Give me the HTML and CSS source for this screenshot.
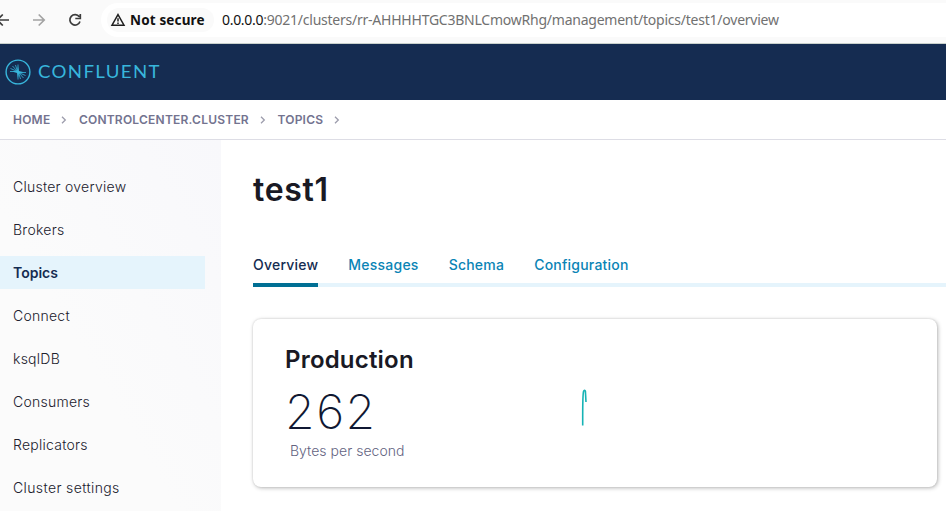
FILE: index.html
```html
<!DOCTYPE html>
<html lang="en">
<head>
<meta charset="utf-8">
<title>test1 - Overview</title>
<link rel="stylesheet" href="styles.css">
</head>
<body>
<div class="toolbar">
  <svg class="nav-icons" width="101" height="43" viewBox="0 0 101 43" fill="none" stroke="#3c3c3c" stroke-width="1.7">
    <path d="M9 20H-3M2.800 14.500L-2.700 20l5.500 5.500"/>
    <path stroke="#a3a3a3" d="M33 20h11M38.700 14.500L44.200 20l-5.500 5.500"/>
    <path d="M79.300 16.800A5.200 5.200 0 1 0 80 21.500M80.300 14v4.500h-5"/>
  </svg>
  <div class="omnibox">
    <div class="chip">
      <svg width="16" height="16" viewBox="0 0 16 16" fill="none" stroke="#1f1f1f" stroke-width="1.500"><path d="M8 2.600L14 13.200H2z"/><path d="M8 6.200v3.400M8 10.600v1.500"/></svg>
      <span class="chip-label">Not secure</span>
    </div>
    <span class="host">0.0.0.0</span><span class="path">:9021/clusters/rr-AHHHHTGC3BNLCmowRhg/management/topics/test1/overview</span>
  </div>
</div>
<header class="header">
  <svg width="26" height="26" viewBox="0 0 26 26" fill="none" stroke="#38b6dc" stroke-width="1.400">
    <circle cx="13" cy="13" r="11.900"/>
    <path stroke-width=".8" d="M5 12.500H13V5.500M21 13.500H13V20.500M12.500 12.500L10.500 6M12.500 12.500L7.500 7M12.500 12.500L5.500 9.500M13.500 13.500L15.500 20M13.500 13.500L18.500 19M13.500 13.500L20.500 16.500"/>
    <path fill="#38b6dc" stroke="none" d="M13 7l.9 5.100L19 13.200 14 13.900 12.900 19 12.100 13.900 7 12.600l5.100-.5z"/>
  </svg>
  <span class="wordmark">CONFLUENT</span>
</header>
<nav class="crumbs">
  <a>HOME</a><svg width="6" height="8" viewBox="0 0 6 8"><path d="M1 .8L4.300 4 1 7.200"/></svg>
  <a>CONTROLCENTER.CLUSTER</a><svg width="6" height="8" viewBox="0 0 6 8"><path d="M1 .8L4.300 4 1 7.200"/></svg>
  <a>TOPICS</a><svg width="6" height="8" viewBox="0 0 6 8"><path d="M1 .8L4.300 4 1 7.200"/></svg>
</nav>
<div class="body">
  <aside class="sidebar">
    <a>Cluster overview</a>
    <a>Brokers</a>
    <a class="active">Topics</a>
    <a>Connect</a>
    <a>ksqlDB</a>
    <a>Consumers</a>
    <a>Replicators</a>
    <a>Cluster settings</a>
  </aside>
  <main class="main">
    <h1>test1</h1>
    <div class="tabs">
      <a class="active">Overview</a><a>Messages</a><a>Schema</a><a>Configuration</a>
    </div>
    <section class="card">
      <div class="metric">
        <h2>Production</h2>
        <div class="value">262</div>
        <div class="unit">Bytes per second</div>
      </div>
      <svg class="spark" width="10" height="40" viewBox="0 0 10 40" fill="none" stroke="#16b3b5" stroke-width="1.600"><path d="M2.700 37.500V29C2.700 18 3 5 3.600 3.200 4.100 1.800 5 2 5.400 3.300L6 14"/></svg>
    </section>
  </main>
</div>
</body>
</html>
```
FILE: styles.css
```css
* { box-sizing: border-box; }
body {
  margin: 0;
  width: 946px;
  height: 511px;
  overflow: hidden;
  background: #fff;
  font-family: Inter, "Liberation Sans", sans-serif;
}
.toolbar {
  display: flex;
  height: 44px;
  background: #fafafa;
  border-bottom: 1px solid #c9d1cc;
}
.nav-icons { flex: none; }
.omnibox {
  display: flex;
  align-items: center;
  flex: 1;
  height: 34px;
  margin-top: 3px;
  padding-left: 6px;
  border-radius: 17px 0 0 17px;
  background: #fff;
  font-family: "Noto Sans", sans-serif;
  font-size: 14px;
  line-height: 18px;
  white-space: nowrap;
}
.omnibox > span { padding-bottom: 1px; }
.chip {
  display: flex;
  align-items: center;
  width: 107px;
  height: 24px;
  margin-right: 8px;
  padding-left: 3px;
  border-radius: 12px;
  background: #fafafa;
}
.chip-label {
  margin-left: 4px;
  font-size: 13.500px;
  font-weight: 700;
  letter-spacing: .15px;
  color: #111;
}
.host { color: #111; letter-spacing: -.3px; }
.path { color: #717171; letter-spacing: -.235px; }
.header {
  display: flex;
  align-items: center;
  height: 56px;
  padding-left: 4.500px;
  background: #152c51;
}
.wordmark {
  margin-left: 7.500px;
  padding-bottom: 1px;
  font-family: Lato, sans-serif;
  font-size: 16.500px;
  letter-spacing: 1.200px;
  color: #38b6dc;
  transform: scaleX(1.13);
  transform-origin: left;
}
.crumbs {
  display: flex;
  align-items: center;
  height: 40px;
  padding-left: 13px;
  border-bottom: 1px solid #dddde5;
  font-size: 12px;
  font-weight: 600;
  letter-spacing: .22px;
  color: #73738f;
}
.crumbs svg {
  margin: 0 11.500px 0 11px;
  fill: none;
  stroke: #9c9cac;
  stroke-width: 1.300;
}
.body { display: flex; height: 371px; }
.sidebar {
  flex: none;
  width: 221px;
  padding: 30px 16px 0 0;
  background: linear-gradient(to top right, #fbfbfb 40%, #f8f8fb);
}
.sidebar a {
  display: block;
  height: 33px;
  margin-bottom: 10px;
  padding-left: 13px;
  font-size: 14px;
  font-weight: 300;
  line-height: 33px;
  letter-spacing: .25px;
  color: #20202c;
}
.sidebar a:last-child { letter-spacing: .38px; }
.sidebar .active { background: #e5f4fc; font-weight: 600; letter-spacing: 0; color: #152c51; }
.main { flex: 1; min-width: 0; padding-left: 32px; }
h1 {
  margin: 30px 0 0;
  font-size: 32px;
  line-height: 40px;
  font-weight: 600;
  letter-spacing: .7px;
  color: #191924;
}
.tabs {
  display: flex;
  gap: 30px;
  height: 38px;
  margin-top: 39px;
  border-bottom: 4px solid #e5f4fc;
  font-size: 14px;
  font-weight: 500;
  line-height: 32px;
  letter-spacing: .225px;
  color: #0a84b5;
}
.tabs a { height: 38px; }
.tabs .active { border-bottom: 4px solid #006f94; color: #152c51; }
.card {
  display: flex;
  width: 684px;
  height: 168px;
  margin-top: 32px;
  padding: 25px 32px;
  border-radius: 8px;
  box-shadow: 0 0 2px rgba(0,0,0,.12), 1px 1px 4px rgba(0,0,0,.28);
}
.metric { width: 295px; }
h2 {
  margin: 0;
  font-size: 24px;
  line-height: 32px;
  font-weight: 600;
  letter-spacing: .2px;
  color: #191924;
}
.value {
  font-size: 48px;
  line-height: 72px;
  font-weight: 200;
  letter-spacing: 1.500px;
  color: #101832;
}
.unit {
  margin-top: -6px;
  padding-left: 5px;
  font-size: 14px;
  line-height: 18px;
  font-weight: 300;
  letter-spacing: .03px;
  color: #63637f;
}
.spark { margin-top: 44px; }
```
